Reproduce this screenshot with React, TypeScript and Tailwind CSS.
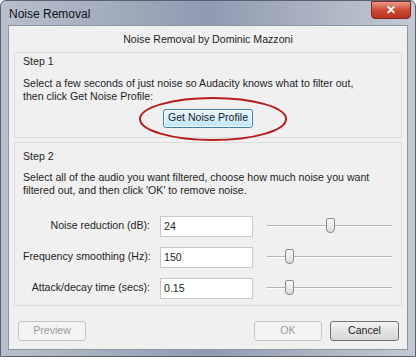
import React from "react";

const font = { fontFamily: '"Liberation Sans", Arial, sans-serif' };

function Slider({ pos }: { pos: number }) {
  return (
    <div className="relative h-[20px] w-[125px]">
      <div className="absolute left-0 right-0 top-[9px] h-[2px] border-t border-[#b5b5b5] border-b-[#fff] border-b" />
      <div
        className="absolute top-[2px] h-[15px] w-[9px] rounded-b-[4px] rounded-t-[2px] border border-[#8a8a8a] bg-gradient-to-b from-[#fafafa] to-[#dcdcdc]"
        style={{ left: pos }}
      />
    </div>
  );
}

function Row({ label, value, pos }: { label: string; value: string; pos: number }) {
  return (
    <div className="flex items-center">
      <div className="w-[131px] whitespace-nowrap pr-[4px] text-right">{label}</div>
      <div className="ml-[6px] h-[21px] w-[93px] border border-[#c8c8c8] bg-white pl-[3px] leading-[19px]">
        {value}
      </div>
      <div className="ml-[14px]">
        <Slider pos={pos} />
      </div>
    </div>
  );
}

export default function App() {
  return (
    <div className="h-[360px] w-[420px] whitespace-nowrap bg-white text-[10.6px] text-[#1e1e1e]" style={font}>
      <div className="flex h-[357px] w-[416px] flex-col rounded-t-[6px] border border-[#5a6270] bg-gradient-to-r from-[#b7c0cc] via-[#8f9bb0] to-[#c4cad3] px-[7px] pb-[6px]">
        <div className="flex h-[24px] items-start">
          <div className="pt-[4px] pl-[1px] text-[12px] text-[#111]">Noise Removal</div>
          <div className="ml-auto mr-[-3px] flex h-[18px] w-[40px] items-center justify-center rounded-b-[4px] border border-[#7a2a22] bg-gradient-to-b from-[#e8998c] via-[#cc4a35] to-[#b8321f] text-[12px] font-bold text-white">
            ✕
          </div>
        </div>
        <div className="relative flex flex-1 flex-col border border-[#8d96a3] bg-[#f0f0f0] px-[5px]">
          <div className="pt-[6px] text-center">Noise Removal by Dominic Mazzoni</div>
          <div className="mt-[4px] h-[86px] border border-[#dcdcdc] px-[8px] pt-[1px]">
            <div>Step 1</div>
            <div className="mt-[7px] leading-[13px]">
              Select a few seconds of just noise so Audacity knows what to filter out,
              <br />
              then click Get Noise Profile:
            </div>
            <div className="mt-[6px] flex justify-center">
              <div className="flex h-[19px] w-[90px] items-center justify-center rounded-[3px] border border-[#3c7fb1] bg-gradient-to-b from-[#eaf6fd] to-[#bee6fd] shadow-[inset_0_0_0_1px_#fff]">
                Get Noise Profile
              </div>
            </div>
          </div>
          <div className="mt-[4px] h-[164px] border border-[#dcdcdc] px-[8px] pt-[6px]">
            <div>Step 2</div>
            <div className="mt-[6px] leading-[13px]">
              Select all of the audio you want filtered, choose how much noise you want
              <br />
              filtered out, and then click 'OK' to remove noise.
            </div>
            <div className="mt-[19px] flex flex-col gap-[10px]">
              <Row label="Noise reduction (dB):" value="24" pos={59} />
              <Row label="Frequency smoothing (Hz):" value="150" pos={18} />
              <Row label="Attack/decay time (secs):" value="0.15" pos={18} />
            </div>
          </div>
          <div className="mt-[15px] flex items-center">
            <div className="ml-[4px] flex h-[20px] w-[68px] items-center justify-center rounded-[3px] border border-[#c5c5c5] bg-[#f4f4f4] text-[#9a9a9a]">
              Preview
            </div>
            <div className="ml-auto flex h-[20px] w-[68px] items-center justify-center rounded-[3px] border border-[#c5c5c5] bg-[#f4f4f4] text-[#9a9a9a]">
              OK
            </div>
            <div className="ml-[8px] mr-[3px] flex h-[20px] w-[69px] items-center justify-center rounded-[3px] border border-[#707070] bg-gradient-to-b from-[#f2f2f2] to-[#d6d6d6]">
              Cancel
            </div>
          </div>
          <svg className="absolute left-[129px] top-[69px]" width="150" height="48" viewBox="0 0 150 48">
            <ellipse cx="75" cy="24" rx="73" ry="21" fill="none" stroke="#b71c1c" strokeWidth="2" />
          </svg>
        </div>
      </div>
    </div>
  );
}
